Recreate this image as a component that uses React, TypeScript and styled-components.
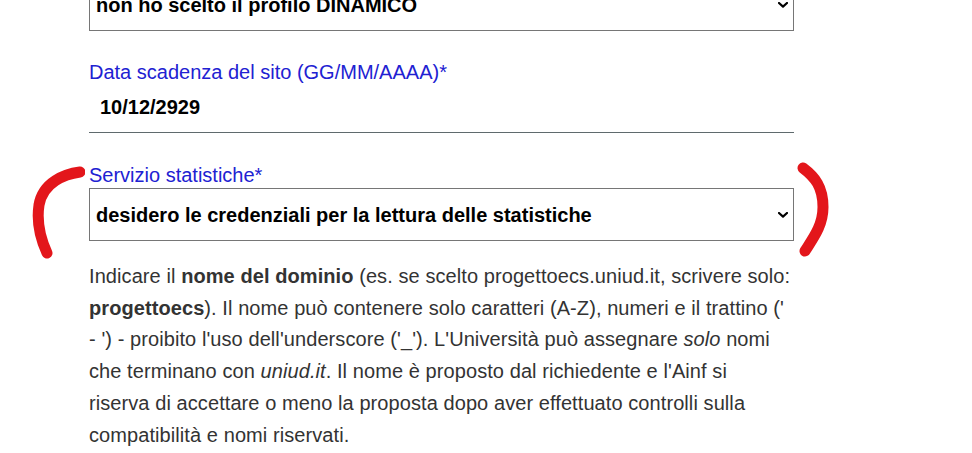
import styled, { createGlobalStyle } from "styled-components";

const GlobalStyle = createGlobalStyle`
  html, body {
    margin: 0;
    padding: 0;
    background: #ffffff;
    overflow: hidden;
  }
  body {
    font-family: "Liberation Sans", Arial, sans-serif;
  }
`;

const Page = styled.div`
  width: 972px;
  height: 453px;
  overflow: hidden;
  position: relative;
`;

const Form = styled.form`
  width: 705px;
  margin: -22px 0 0 89px;
  display: flex;
  flex-direction: column;
`;

const Field = styled.div<{ $gap?: number }>`
  display: flex;
  flex-direction: column;
  margin-bottom: ${(p) => p.$gap ?? 0}px;
`;

const Label = styled.label`
  font-size: 20px;
  line-height: 22px;
  color: #2121d2;
  margin-bottom: 2px;
`;

const SelectWrap = styled.div`
  position: relative;
  height: 53px;
`;

const Select = styled.select`
  appearance: none;
  -webkit-appearance: none;
  width: 100%;
  height: 53px;
  box-sizing: border-box;
  border: 1px solid #767676;
  border-radius: 0;
  background: #fff;
  padding: 0 30px 0 6px;
  font-family: "Liberation Sans", Arial, sans-serif;
  font-size: 20px;
  font-weight: 700;
  color: #000;
  outline: none;
`;

const Chevron = styled.svg`
  position: absolute;
  right: 6px;
  top: 50%;
  margin-top: -3px;
  width: 10px;
  height: 6px;
  pointer-events: none;
`;

const DateInput = styled.input`
  border: none;
  border-bottom: 1px solid #5f6a6d;
  height: 48px;
  box-sizing: border-box;
  padding: 0 0 2px 11px;
  font-family: "Liberation Sans", Arial, sans-serif;
  font-size: 20px;
  font-weight: 700;
  color: #000;
  outline: none;
  background: transparent;
`;

const Help = styled.p`
  margin: 20px 0 0;
  font-size: 20px;
  line-height: 31.7px;
  letter-spacing: 0.08px;
  color: #333;
`;

const Mark = styled.svg`
  position: absolute;
  pointer-events: none;
`;

function Dropdown({ value }: { value: string }) {
  return (
    <SelectWrap>
      <Select defaultValue={value}>
        <option value={value}>{value}</option>
      </Select>
      <Chevron viewBox="0 0 10 6">
        <path d="M1 1 L5 4.6 L9 1" fill="none" stroke="#000" strokeWidth="2.2" strokeLinecap="round" strokeLinejoin="round" />
      </Chevron>
    </SelectWrap>
  );
}

export default function App() {
  return (
    <Page>
      <GlobalStyle />
      <Form>
        <Field $gap={30}>
          <Dropdown value="non ho scelto il profilo DINAMICO" />
        </Field>
        <Field $gap={31}>
          <Label>Data scadenza del sito (GG/MM/AAAA)*</Label>
          <DateInput defaultValue="10/12/2929" />
        </Field>
        <Field>
          <Label>Servizio statistiche*</Label>
          <Dropdown value="desidero le credenziali per la lettura delle statistiche" />
        </Field>
        <Help>
          Indicare il <b>nome del dominio</b> (es. se scelto progettoecs.uniud.it, scrivere solo:
          <br />
          <b>progettoecs</b>). Il nome può contenere solo caratteri (A-Z), numeri e il trattino ('
          <br />- ') - proibito l'uso dell'underscore ('_'). L'Università può assegnare <i>solo</i> nomi
          <br />
          che terminano con <i>uniud.it</i>. Il nome è proposto dal richiedente e l'Ainf si
          <br />
          riserva di accettare o meno la proposta dopo aver effettuato controlli sulla
          <br />
          compatibilità e nomi riservati.
        </Help>
      </Form>
      <Mark width="60" height="100" viewBox="0 0 60 100" style={{ left: 25, top: 160 }}>
        <path d="M55 12 C40 14 18 22 14 45 C11 65 16 80 22 93" fill="none" stroke="#e3161b" strokeWidth="11" strokeLinecap="round" />
      </Mark>
      <Mark width="60" height="110" viewBox="0 0 60 110" style={{ left: 790, top: 155 }}>
        <path d="M13 13 C25 22 33 32 33 52 C33 70 24 82 15 96" fill="none" stroke="#e3161b" strokeWidth="11" strokeLinecap="round" />
      </Mark>
    </Page>
  );
}
